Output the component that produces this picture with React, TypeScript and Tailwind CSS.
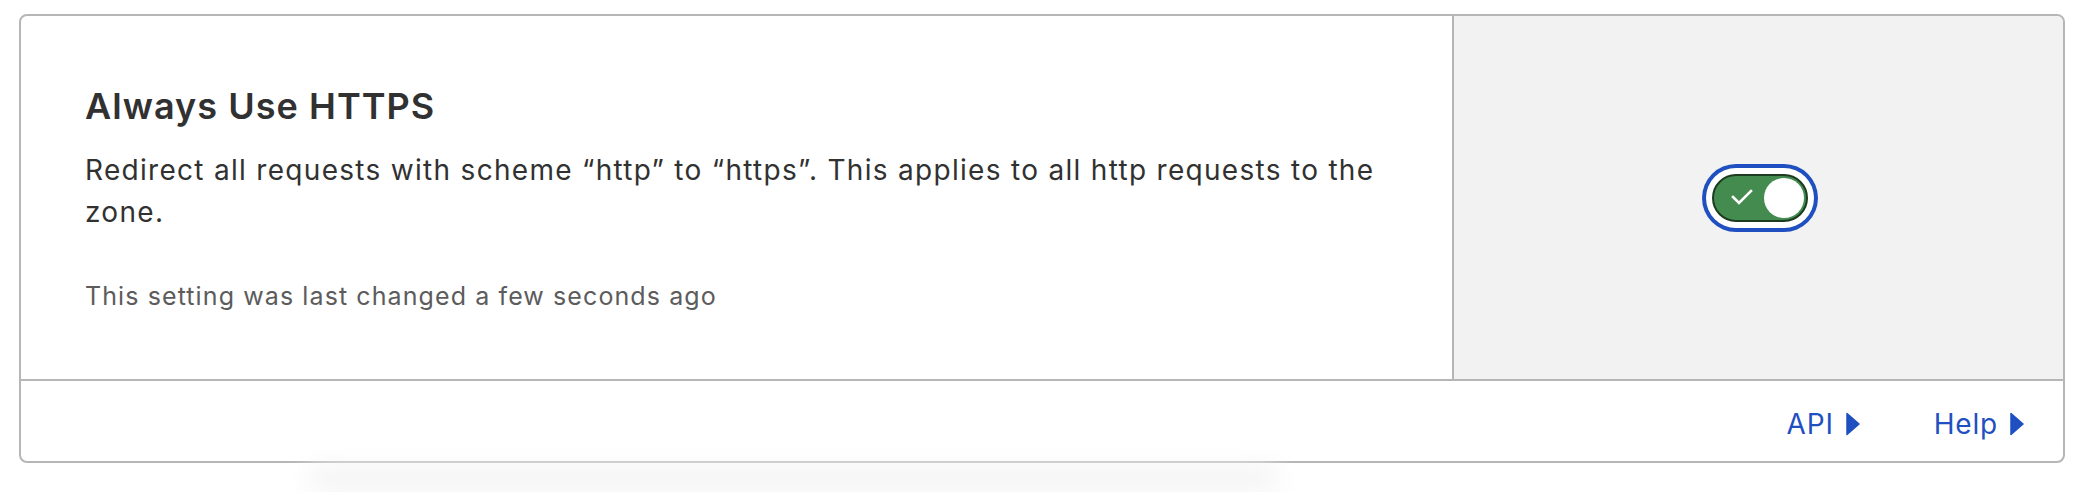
import { useState } from "react";

const font = { fontFamily: "Inter, 'Noto Sans', sans-serif" };

function Caret() {
  return (
    <svg width="14" height="24" viewBox="0 0 14 24" className="ml-[12px] shrink-0">
      <path d="M1 1.5 L13 12 L1 22.5 Z" fill="#1f4fc0" stroke="#1f4fc0" strokeWidth="1.5" strokeLinejoin="round" />
    </svg>
  );
}

function Toggle() {
  const [on, setOn] = useState(true);
  return (
    <button
      onClick={() => setOn(!on)}
      aria-pressed={on}
      className="relative flex h-[48px] w-[96px] items-center rounded-full border-2 border-[#1c3b20] bg-[#448b50] ring-4 ring-[#1f4fc0] ring-offset-[6px] ring-offset-white"
    >
      <svg width="22" height="16" viewBox="0 0 22 16" className="absolute left-[17px] top-[13px]">
        <path d="M2 8 L8 14 L20 2" fill="none" stroke="white" strokeWidth="2.6" strokeLinecap="square" />
      </svg>
      <span className="absolute right-[2px] top-[2px] h-[40px] w-[40px] rounded-full bg-white" />
    </button>
  );
}

export default function App() {
  return (
    <div className="h-[492px] w-full overflow-hidden bg-white pt-[14px]" style={font}>
      <div className="ml-[19px] w-[2046px] overflow-hidden rounded-[8px] border-2 border-[#b6b6b6] bg-white">
        <div className="flex h-[365px] border-b-2 border-[#b6b6b6]">
          <div className="flex-1 pl-[64px] pr-[60px] pt-[68px]">
            <h2 className="text-[36px] font-semibold leading-[44px] tracking-[1.05px] text-[#313131]">Always Use HTTPS</h2>
            <p className="mt-[21px] text-[28px] leading-[42px] tracking-[1.3px] text-[#313131]">
              Redirect all requests with scheme “http” to “https”. This applies to all http requests to the zone.
            </p>
            <p className="mt-[45px] text-[25px] leading-[36px] tracking-[1.1px] text-[#5c5c5c]">
              This setting was last changed a few seconds ago
            </p>
          </div>
          <div className="flex w-[611px] items-center justify-center border-l-2 border-[#b6b6b6] bg-[#f2f2f2] pl-[2px]">
            <Toggle />
          </div>
        </div>
        <div className="flex h-[80px] items-center justify-end gap-[74px] pr-[39px] pt-[5px] text-[28px] leading-[42px] tracking-[0.8px] text-[#1f4fc0]">
          <a href="#" className="flex items-center">
            API
            <Caret />
          </a>
          <a href="#" className="flex items-center">
            Help
            <Caret />
          </a>
        </div>
      </div>
      <div className="ml-[307px] mt-[3px] h-[26px] w-[972px] rounded-full bg-[#f4f4f4] blur-md" />
    </div>
  );
}
